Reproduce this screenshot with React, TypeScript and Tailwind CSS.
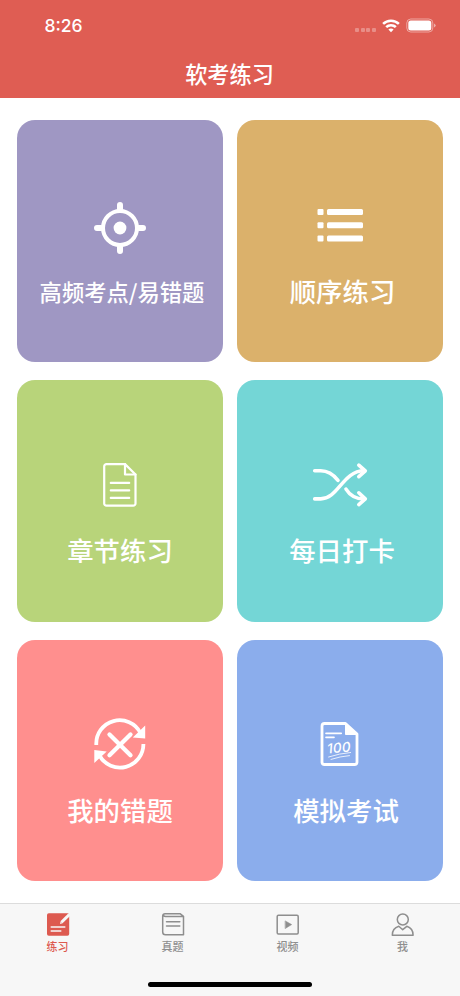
import type { ReactNode } from "react";

const CARDS: {
	label: string;
	color: string;
	text: string;
	icon: ReactNode;
}[] = [
	{
		label: "高频考点/易错题",
		color: "bg-[#9f97c3]",
		text: "text-[22.3px] pl-[4px]",
		icon: (
			<>
				<circle cx="30" cy="30" r="17" strokeWidth="4" />
				<path d="M30 7v4M30 49v4M7 30h4M49 30h4" strokeWidth="6" />
				<circle cx="30" cy="30" fill="white" r="6.4" stroke="none" />
			</>
		),
	},
	{
		label: "顺序练习",
		color: "bg-[#dbb16b]",
		text: "text-[26.4px] pl-[5px]",
		icon: (
			<g fill="white" stroke="none">
				<rect height="6" rx="1" width="6" x="7.5" y="11" />
				<rect height="6" rx="1" width="6" x="7.5" y="24.3" />
				<rect height="6" rx="1" width="6" x="7.5" y="37.5" />
				<rect height="6" rx="1.5" width="36" x="17" y="11" />
				<rect height="6" rx="1.5" width="36" x="17" y="24.3" />
				<rect height="6" rx="1.5" width="36" x="17" y="37.5" />
			</g>
		),
	},
	{
		label: "章节练习",
		color: "bg-[#b8d47a]",
		text: "text-[26.4px]",
		icon: (
			<g strokeWidth="2.2">
				<path d="M35 7.1H16.5a2.3 2.3 0 0 0-2.3 2.3v37a2.3 2.3 0 0 0 2.3 2.3h26.7a2.3 2.3 0 0 0 2.3-2.3V17.5z" />
				<path d="M35 7.1v10.4h10.5M20.8 25.9h18.4M20.8 33.4h18.4M20.8 40.9h18.4" />
			</g>
		),
	},
	{
		label: "每日打卡",
		color: "bg-[#74d6d6]",
		text: "text-[26.4px] pl-[4px]",
		icon: (
			<g strokeWidth="3.6">
				<path d="M4.7 13.8h6c7.5 0 12.5 3.5 17.3 9.5" />
				<path d="M4.7 41.9h6C28 41.9 33 13.8 54 13.8" />
				<path d="M36 32.1c4 6.5 9.5 9.8 18 9.8" />
				<path d="M48.8 8.1l6.5 5.7-6.5 5.9M48.8 35.8l6.5 6.1-6.5 5.7" />
			</g>
		),
	},
	{
		label: "我的错题",
		color: "bg-[#ff8f8e]",
		text: "text-[26.4px]",
		icon: (
			<>
				<g strokeLinecap="butt" strokeWidth="3.8">
					<path d="M6.3 28A23.4 23.4 0 0 1 50.5 16" />
					<path d="M53.4 27A23.4 23.4 0 0 1 9.5 38.5" />
				</g>
				<path
					d="M55.2 8.6v13L42.8 20.5zM4.3 46V33l12.4 1.5z"
					fill="white"
					stroke="none"
				/>
				<path d="M19.5 17.5l21 20.7M40.5 17.5l-21 20.7" strokeWidth="4.3" />
			</>
		),
	},
	{
		label: "模拟考试",
		color: "bg-[#8badec]",
		text: "text-[26.4px] pl-[12px]",
		icon: (
			<>
				<path
					d="M35.5 6.5H14.6a2.6 2.6 0 0 0-2.6 2.6v35.8a2.6 2.6 0 0 0 2.6 2.6h29.8a2.6 2.6 0 0 0 2.6-2.6V17z"
					strokeWidth="2.8"
				/>
				<path d="M35.5 6.5V17.5H47z" fill="white" strokeWidth="1" />
				<path d="M16 16.3h15.2M16 20.3h8" strokeWidth="1.7" />
				<text
					className="font-['Inter',sans-serif] font-medium italic"
					fill="white"
					fontSize="13.5"
					letterSpacing=".3"
					stroke="none"
					transform="rotate(-5 29 31)"
					x="17"
					y="35.6"
				>
					100
				</text>
				<path d="M18.6 40q11-3.6 22-4.5M21 42.4q9-3 18.5-3.8" strokeWidth=".8" />
			</>
		),
	},
];

const TABS: { label: string; active?: boolean; icon: ReactNode }[] = [
	{
		label: "练习",
		active: true,
		icon: (
			<>
				<rect fill="#dd5a50" height="22.5" rx="1.8" stroke="none" width="22.2" x="1" y="1.3" />
				<path d="M15.5 10.3L23.3 2.5" stroke="#f7f7f7" strokeLinecap="butt" strokeWidth="3" />
				<path d="M14 12l.6-2.6 2 1.9z" fill="#f7f7f7" stroke="none" />
				<path d="M5.2 15h13.6M5.2 19h9.6" stroke="#f7f7f7" strokeWidth="1.5" />
			</>
		),
	},
	{
		label: "真题",
		icon: (
			<>
				<path d="M2.5 3.6q.8.8 2.2.8h17.8v18.4H4.5a2.8 2.8 0 0 1-2.8-2.8V4a2.3 2.3 0 0 1 2.3-2.3h15l3.5 2.7" />
				<path d="M5.5 9.7h13.3M5.5 14h13.3" />
			</>
		),
	},
	{
		label: "视频",
		icon: (
			<>
				<rect height="18.8" rx="1.2" width="21" x="1.2" y="3.2" />
				<path d="M9.4 9l6.3 3.6-6.3 3.8z" fill="currentColor" strokeWidth=".5" />
			</>
		),
	},
	{
		label: "我",
		icon: (
			<>
				<circle cx="11.8" cy="7.5" r="5.5" />
				<path d="M7.8 14.3C3.8 15.5 1.300 19 1.300 23.200h20.800c0-4.200-2.500-7.700-6.300-8.900l-4.100 3.400z" />
			</>
		),
	},
];

function StatusBar() {
	return (
		<div className="flex h-[49px] items-center justify-between pr-[24px] pl-[44.5px]">
			<span className="mt-[3px] font-['Inter',sans-serif] font-medium text-[17.5px] leading-none">
				8:26
			</span>
			<div className="flex items-center">
				<div className="mt-[10px] mr-[6px] flex gap-[1.7px] opacity-30">
					<i className="size-[4px] rounded-[1px] bg-white" />
					<i className="size-[4px] rounded-[1px] bg-white" />
					<i className="size-[4px] rounded-[1px] bg-white" />
					<i className="size-[4px] rounded-[1px] bg-white" />
				</div>
				<svg className="mt-[2px] h-[14px] w-[18px]" fill="white" viewBox="0 0 18 14">
					<path d="M9 .4c3.4 0 6.5 1.3 8.8 3.5l-1.8 1.9a10 10 0 0 0-14 0L.2 3.9A12.6 12.6 0 0 1 9 .4z" />
					<path d="M9 5c2.2 0 4.2.9 5.7 2.3l-1.8 1.8a5.6 5.6 0 0 0-7.8 0L3.300 7.300A8.200 8.200 0 0 1 9 5z" />
					<path d="M9 9.400c1 0 1.900.4 2.600 1L9 13.200l-2.600-2.800c.7-.6 1.600-1 2.600-1z" />
				</svg>
				<svg className="mt-[2px] ml-[6px] h-[15px] w-[30px]" fill="white" viewBox="0 0 30 15">
					<rect fill="none" height="13" rx="4" stroke="white" strokeOpacity=".45" width="26" x=".8" y="1" />
					<rect height="10" rx="2.5" width="23" x="2.3" y="2.5" />
					<path d="M28 5.500q1.700.8 1.700 2T28 9.500z" opacity=".5" />
				</svg>
			</div>
		</div>
	);
}

export default function App() {
	return (
		<div className="flex h-[996px] w-[460px] flex-col overflow-hidden bg-white font-['Noto_Sans_CJK_SC',sans-serif]">
			<header className="h-[98px] shrink-0 bg-[#df5d53] text-white">
				<StatusBar />
				<h1 className="pr-px text-center font-medium text-[22.2px] leading-[48px]">
					软考练习
				</h1>
			</header>

			<main className="grid grow grid-cols-[206px_206px] content-start gap-x-[14px] gap-y-[18px] px-[17px] pt-[22.4px]">
				{CARDS.map((card) => (
					<section
						className={`flex h-[241.6px] flex-col items-center rounded-[18px] pt-[77.5px] text-white ${card.color}`}
						key={card.label}
					>
						<svg
							className="size-[60px] shrink-0"
							fill="none"
							stroke="white"
							strokeLinecap="round"
							strokeLinejoin="round"
							viewBox="0 0 60 60"
						>
							{card.icon}
						</svg>
						<h2
							className={`mt-[12.8px] whitespace-nowrap font-medium leading-[40px] ${card.text}`}
						>
							{card.label}
						</h2>
					</section>
				))}
			</main>

			<nav className="flex h-[93px] shrink-0 flex-col border-[#dcdcdc] border-t bg-[#f7f7f7]">
				<div className="grid grid-cols-4 pt-[8px]">
					{TABS.map((tab) => (
						<div
							className={`flex flex-col items-center ${tab.active ? "text-[#dd5a50]" : "text-[#8e8e8e]"}`}
							key={tab.label}
						>
							<svg
								className="h-[25px] w-[24px]"
								fill="none"
								stroke="currentColor"
								strokeLinecap="round"
								strokeLinejoin="round"
								strokeWidth="1.5"
								viewBox="0 0 24 25"
							>
								{tab.icon}
							</svg>
							<span className="mt-px font-medium text-[11px] leading-[16px]">
								{tab.label}
							</span>
						</div>
					))}
				</div>
				<div className="mx-auto mt-auto mb-[9px] h-[5.5px] w-[164px] rounded-full bg-black" />
			</nav>
		</div>
	);
}
